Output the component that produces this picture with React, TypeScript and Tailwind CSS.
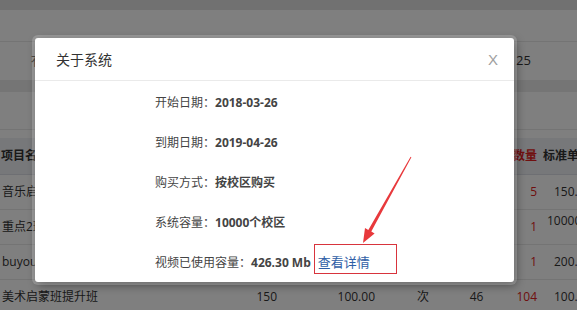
const rows = [
  { name: "音乐启蒙班", a: "", b: "", unit: "", c: "", qty: "5", price: "150.00" },
  { name: "重点2班", a: "", b: "", unit: "", c: "", qty: "1", price: "10000" },
  { name: "buyou", a: "", b: "", unit: "", c: "", qty: "1", price: "200.00" },
  { name: "美术启蒙班提升班", a: "150", b: "100.00", unit: "次", c: "46", qty: "104", price: "100.00" },
];

const info = [
  { label: "开始日期：", value: "2018-03-26" },
  { label: "到期日期：", value: "2019-04-26" },
  { label: "购买方式：", value: "按校区购买" },
  { label: "系统容量：", value: "10000个校区" },
];

export default function App() {
  return (
    <div
      className="relative w-[577px] h-[310px] overflow-hidden bg-white text-[#333]"
      style={{ fontFamily: '"Open Sans", "Noto Sans CJK SC", sans-serif' }}
    >
      {/* page under the dialog */}
      <div className="h-[10px] bg-[#e2e2e2]" />
      <div className="h-[32px] border-b border-[#e8e8e8]" />
      <div className="h-[38px] flex items-center text-[13px]">
        <span className="w-[516px] pl-[31px]">有</span>
        <span>25</span>
      </div>
      <div className="h-[12px] bg-[#ebebeb]" />
      <div className="h-[38px] border-b border-[#e8e8e8]" />
      <div className="h-[8px]" />

      <div className="text-[12px]">
        <div className="grid grid-cols-[230px_50px_113px_60px_47px_40px_80px] h-[37px] items-center bg-[#eef0f4] border-b border-[#dcdfe6] font-bold whitespace-nowrap">
          <div className="pl-[1px]">项目名称</div>
          <div />
          <div />
          <div />
          <div />
          <div className="text-right pr-[3px] text-[#e02020]">数量</div>
          <div className="pl-[3px]">标准单价</div>
        </div>
        {rows.map((r) => (
          <div
            key={r.name}
            className="grid grid-cols-[230px_50px_113px_60px_47px_40px_80px] h-[35px] items-center border-b border-[#e8e8e8] whitespace-nowrap"
          >
            <div className="pl-[2px]">{r.name}</div>
            <div className="text-right pr-[3px]">{r.a}</div>
            <div className="text-right pr-[18px]">{r.b}</div>
            <div className="text-center">{r.unit}</div>
            <div className="text-center">{r.c}</div>
            <div className="text-right pr-[3px] text-[#e02020]">{r.qty}</div>
            <div className={r.price === "10000" ? "pl-[7px] -mt-[12px]" : "pl-[14px]"}>{r.price}</div>
          </div>
        ))}
      </div>

      {/* overlay */}
      <div className="absolute inset-0 bg-black/50" />

      {/* dialog */}
      <div className="absolute left-[35px] top-[38px] w-[479px] h-[244px] bg-white rounded-[3px] ring-[3px] ring-white/20 shadow-[2px_3px_10px_rgba(0,0,0,0.45)]">
        <div className="h-[43px] flex items-center justify-between pl-[21px] pr-[16px] border-b border-[#eaeaea]">
          <span className="text-[14px] text-[#333]">关于系统</span>
          <span
            className="text-[15px] leading-none text-[#a0a0a0]"
            style={{ fontFamily: '"Liberation Sans", sans-serif' }}
          >
            X
          </span>
        </div>
        <div className="pt-[2px] pl-[120px] text-[12px] text-[#444]">
          {info.map((it) => (
            <div key={it.label} className="h-[40px] flex items-center">
              <span>{it.label}</span>
              <span className="font-bold">{it.value}</span>
            </div>
          ))}
          <div className="h-[40px] flex items-center">
            <span>视频已使用容量：</span>
            <span className="font-bold">426.30 Mb</span>
            <span className="ml-[7px] text-[13px] text-[#2f5ea6]">查看详情</span>
          </div>
        </div>
      </div>

      {/* annotation */}
      <div className="absolute left-[314px] top-[244px] w-[83px] h-[30px] border border-[#d8343d]" />
      <svg className="absolute left-0 top-0 pointer-events-none" width="577" height="310" viewBox="0 0 577 310">
        <polygon
          points="411.4,157.2 371.3,231.6 374.6,233.5 363,243 365.0,228.1 368.3,230.0 410.6,156.8"
          fill="#e8393c"
        />
      </svg>
    </div>
  );
}
